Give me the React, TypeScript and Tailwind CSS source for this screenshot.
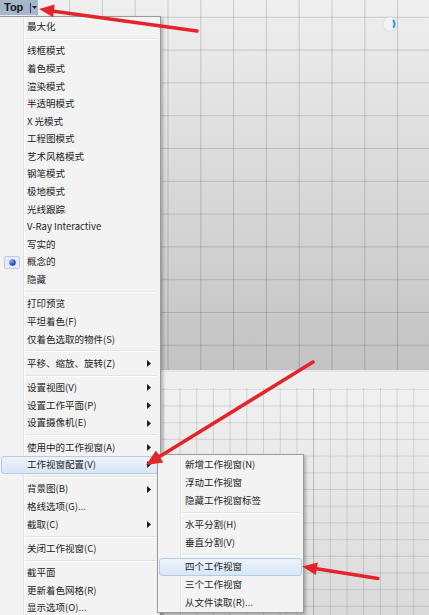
import React from "react";

type Item = { t: string; sub?: boolean; radio?: boolean; hl?: boolean } | "sep";

const mainItems: Item[] = [
  { t: "最大化" },
  "sep",
  { t: "线框模式" },
  { t: "着色模式" },
  { t: "渲染模式" },
  { t: "半透明模式" },
  { t: "X 光模式" },
  { t: "工程图模式" },
  { t: "艺术风格模式" },
  { t: "钢笔模式" },
  { t: "极地模式" },
  { t: "光线跟踪" },
  { t: "V-Ray Interactive" },
  { t: "写实的" },
  { t: "概念的", radio: true },
  { t: "隐藏" },
  "sep",
  { t: "打印预览" },
  { t: "平坦着色(F)" },
  { t: "仅着色选取的物件(S)" },
  "sep",
  { t: "平移、缩放、旋转(Z)", sub: true },
  "sep",
  { t: "设置视图(V)", sub: true },
  { t: "设置工作平面(P)", sub: true },
  { t: "设置摄像机(E)", sub: true },
  "sep",
  { t: "使用中的工作视窗(A)", sub: true },
  { t: "工作视窗配置(V)", sub: true, hl: true },
  "sep",
  { t: "背景图(B)", sub: true },
  { t: "格线选项(G)..." },
  { t: "截取(C)", sub: true },
  "sep",
  { t: "关闭工作视窗(C)" },
  "sep",
  { t: "截平面" },
  { t: "更新着色网格(R)" },
  { t: "显示选项(O)..." },
];

const subItems: Item[] = [
  { t: "新增工作视窗(N)" },
  { t: "浮动工作视窗" },
  { t: "隐藏工作视窗标签" },
  "sep",
  { t: "水平分割(H)" },
  { t: "垂直分割(V)" },
  "sep",
  { t: "四个工作视窗", hl: true },
  { t: "三个工作视窗" },
  { t: "从文件读取(R)..." },
];

function SubArrow() {
  return (
    <svg width="4" height="7" viewBox="0 0 4 7" className="shrink-0">
      <path d="M0 0 L4 3.5 L0 7 Z" fill="#1a1a1a" />
    </svg>
  );
}

function RadioMark() {
  return (
    <div className="w-[16px] h-[13px] ml-[2px] rounded-[2px] border border-[#b7cdea] bg-[#e4edf8] flex items-center justify-center">
      <svg width="7" height="7" viewBox="0 0 7 7">
        <defs>
          <radialGradient id="rg" cx="35%" cy="30%" r="70%">
            <stop offset="0%" stopColor="#9aa8f0" />
            <stop offset="60%" stopColor="#4b5fd0" />
            <stop offset="100%" stopColor="#2a3590" />
          </radialGradient>
        </defs>
        <circle cx="3.5" cy="3.5" r="3.2" fill="url(#rg)" />
      </svg>
    </div>
  );
}

function MainMenu() {
  return (
    <div className="absolute left-0 top-[16px] w-[161px] h-[620px] bg-[#f3f3f3] border border-[#9a9a9a] border-l-0 shadow-[2px_2px_3px_rgba(0,0,0,0.25)] pt-px">
      <div className="absolute left-[23px] top-0 bottom-0 w-px bg-[#e2e3e3]" />
      <div className="absolute left-[24px] top-0 bottom-0 w-px bg-[#ffffff]" />
      <div className="relative flex flex-col">
        {mainItems.map((it, i) =>
          it === "sep" ? (
            <div key={i} className="h-[6.7px] flex flex-col justify-center pl-[25px] pr-[3px]">
              <div className="h-px bg-[#e2e3e3]" />
              <div className="h-px bg-[#ffffff]" />
            </div>
          ) : (
            <div
              key={i}
              className={
                it.hl
                  ? "h-[17.6px] flex items-center mx-[1px] rounded-[3px] border border-[#b3cbe8] bg-gradient-to-b from-[#eef4fc] to-[#d8e6f6]"
                  : "h-[17.6px] flex items-center mx-[1px] border border-transparent"
              }
            >
              <div className="w-[22px] shrink-0 flex items-center">{it.radio ? <RadioMark /> : null}</div>
              <span className="ml-[3px] flex-1 text-[9.5px] leading-none text-[#1c1c1c] whitespace-nowrap">{it.t}</span>
              {it.sub ? <div className="mr-[7px]"><SubArrow /></div> : null}
            </div>
          )
        )}
      </div>
    </div>
  );
}

function SubMenu() {
  return (
    <div className="absolute left-[157px] top-[454px] w-[147px] bg-[#f3f3f3] border border-[#9a9a9a] shadow-[2px_2px_3px_rgba(0,0,0,0.25)] py-px">
      <div className="absolute left-[22px] top-0 bottom-0 w-px bg-[#e2e3e3]" />
      <div className="absolute left-[23px] top-0 bottom-0 w-px bg-[#ffffff]" />
      <div className="relative flex flex-col">
        {subItems.map((it, i) =>
          it === "sep" ? (
            <div key={i} className="h-[6.5px] flex flex-col justify-center pl-[24px] pr-[3px]">
              <div className="h-px bg-[#e2e3e3]" />
              <div className="h-px bg-[#ffffff]" />
            </div>
          ) : (
            <div
              key={i}
              className={
                it.hl
                  ? "h-[17.8px] flex items-center mx-[1px] rounded-[3px] border border-[#b3cbe8] bg-gradient-to-b from-[#eef4fc] to-[#d8e6f6]"
                  : "h-[17.8px] flex items-center mx-[1px] border border-transparent"
              }
            >
              <span className="ml-[25px] text-[9.5px] leading-none text-[#1c1c1c] whitespace-nowrap">{it.t}</span>
            </div>
          )
        )}
      </div>
    </div>
  );
}

function TopGrid() {
  const xs: number[] = [];
  for (let x = 168 - 32.8 * 5; x < 430; x += 32.8) xs.push(x);
  const ys: number[] = [];
  for (let y = 17.3; y < 370; y += 32.8) ys.push(y);
  return (
    <svg className="absolute inset-0" width="429" height="370">
      {xs.map((x, i) => (
        <line key={"x" + i} x1={x} y1={0} x2={x} y2={370} stroke="rgba(0,0,0,0.16)" strokeWidth="1" />
      ))}
      {ys.map((y, i) => (
        <line key={"y" + i} x1={0} y1={y} x2={429} y2={y} stroke="rgba(0,0,0,0.14)" strokeWidth="1" />
      ))}
    </svg>
  );
}

function BottomGrid() {
  const xs: number[] = [];
  for (let x = 163.3 - 16.7 * 9; x < 430; x += 16.7) xs.push(x);
  const ys: number[] = [];
  for (let y = 1.3; y < 230; y += 16.7) ys.push(y);
  return (
    <svg className="absolute inset-0" width="429" height="227">
      {xs.map((x, i) => (
        <line key={"x" + i} x1={x} y1={0} x2={x} y2={227} stroke={Math.abs(x - 314) < 1 ? "rgba(0,0,0,0.2)" : "rgba(0,0,0,0.12)"} strokeWidth="1" />
      ))}
      {ys.map((y, i) => (
        <line key={"y" + i} x1={0} y1={y} x2={429} y2={y} stroke="rgba(0,0,0,0.11)" strokeWidth="1" />
      ))}
    </svg>
  );
}

function Arrows() {
  const red = "#e3242b";
  return (
    <svg className="absolute inset-0 pointer-events-none" width="429" height="615">
      <line x1="197" y1="31" x2="52" y2="11" stroke={red} strokeWidth="3.5" strokeLinecap="round" />
      <polygon points="39,9 54.7,4.6 53.1,17.2" fill={red} />
      <line x1="313" y1="362" x2="158" y2="457.5" stroke={red} strokeWidth="3.5" strokeLinecap="round" />
      <polygon points="146,465 163.3,462.4 156,450.6" fill={red} />
      <line x1="378" y1="578.5" x2="315" y2="568.5" stroke={red} strokeWidth="3.5" strokeLinecap="round" />
      <polygon points="302,566.5 317.8,562.6 315.8,575" fill={red} />
    </svg>
  );
}

export default function App() {
  return (
    <div className="relative w-[429px] h-[615px] overflow-hidden flex flex-col font-['Noto_Sans_CJK_SC','Noto_Sans',sans-serif]">
      <div className="relative h-[370px] shrink-0 bg-gradient-to-b from-[#efefef] to-[#c3c3c3]">
        <TopGrid />
        <div className="absolute left-[383px] top-[17px] w-[14px] h-[14px] rounded-full bg-[#f3f3f3] shadow-[0_0_1px_rgba(0,0,0,0.25)]">
          <svg className="absolute inset-0" width="14" height="14" viewBox="0 0 14 14">
            <path d="M10.5 3.5 Q12.6 7 10.6 10.2" stroke="#229ee6" strokeWidth="2" fill="none" strokeLinecap="round" />
          </svg>
        </div>
      </div>
      <div className="h-[2px] shrink-0 bg-[#e4e4ec]" />
      <div className="h-[16px] shrink-0 bg-[#efefef]" />
      <div className="relative flex-1 bg-gradient-to-b from-[#f1f1f1] to-[#dadada]">
        <BottomGrid />
      </div>

      <div className="absolute left-0 top-0 w-[38px] h-[15px] bg-[#a4b7cb] flex items-center">
        <span className="ml-[4px] font-['Liberation_Sans',sans-serif] font-bold text-[11px] leading-none text-[#151515]">Top</span>
        <div className="ml-[7px] w-px h-[10px] bg-[#3a3a3a]" />
        <svg width="5" height="3" viewBox="0 0 5 3" className="ml-[1px]">
          <path d="M0 0 L5 0 L2.5 3 Z" fill="#222" />
        </svg>
      </div>

      <MainMenu />
      <SubMenu />
      <Arrows />
    </div>
  );
}
